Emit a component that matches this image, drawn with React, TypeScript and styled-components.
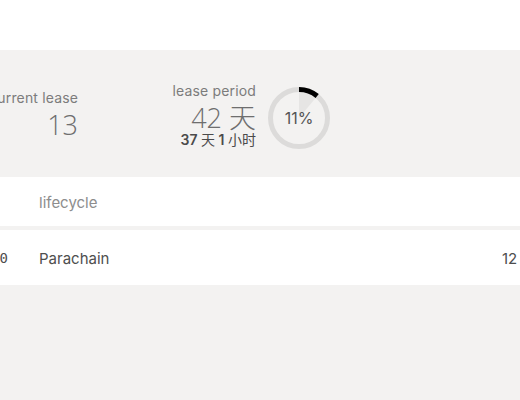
import styled, { createGlobalStyle } from "styled-components";

const GlobalStyle = createGlobalStyle`
  html, body {
    margin: 0;
    padding: 0;
    background: #f3f2f1;
    overflow: hidden;
    font-family: Inter, "Noto Sans CJK SC", sans-serif;
  }
`;

function Donut({ percent }: { percent: number }) {
  const size = 64;
  const c = size / 2;
  const r = 28.5;
  const inner = 26;
  const angle = (percent / 100) * Math.PI * 2;
  const ex = c + r * Math.sin(angle);
  const ey = c - r * Math.cos(angle);
  const ix = c + inner * Math.sin(angle);
  const iy = c - inner * Math.cos(angle);
  const large = percent > 50 ? 1 : 0;
  return (
    <DonutWrap>
      <svg width={size} height={size} viewBox={`0 0 ${size} ${size}`}>
        <circle cx={c} cy={c} r={r} fill="none" stroke="#dcdbda" strokeWidth={5} />
        <path d={`M ${c} ${c} L ${c} ${c - inner} A ${inner} ${inner} 0 ${large} 1 ${ix} ${iy} Z`} fill="#e6e5e4" />
        <path
          d={`M ${c} ${c - r} A ${r} ${r} 0 ${large} 1 ${ex} ${ey}`}
          fill="none"
          stroke="#000"
          strokeWidth={5}
        />
      </svg>
      <DonutLabel>{percent}%</DonutLabel>
    </DonutWrap>
  );
}

export default function App() {
  return (
    <>
      <GlobalStyle />
      <Page>
        <TopBar />
        <Summary>
          <SummaryItem $width={100}>
            <Label>current lease</Label>
            <BigValue>13</BigValue>
          </SummaryItem>
          <SummaryItem $width={110} style={{ marginLeft: 68 }}>
            <Label>lease period</Label>
            <BigValue>42 天</BigValue>
            <SubValue>
              37 <Unit>天</Unit> 1 <Unit>小时</Unit>
            </SubValue>
          </SummaryItem>
          <Donut percent={11} />
        </Summary>
        <Table>
          <Row $height={49}>
            <IdCell />
            <HeadCell>lifecycle</HeadCell>
            <Cell />
          </Row>
          <Row $height={55}>
            <IdCell>2000</IdCell>
            <Cell $grow>Parachain</Cell>
            <Cell>12</Cell>
          </Row>
        </Table>
      </Page>
    </>
  );
}

const Page = styled.div`
  width: 620px;
  margin-left: -22px;
`;

const TopBar = styled.div`
  height: 50px;
  background: #ffffff;
`;

const Summary = styled.section`
  height: 127px;
  display: flex;
  align-items: center;
  padding-top: 1px;
  box-sizing: border-box;
`;

const SummaryItem = styled.div<{ $width: number }>`
  width: ${(p) => p.$width}px;
  display: flex;
  flex-direction: column;
  align-items: flex-end;
  text-align: right;
`;

const Label = styled.div`
  font-size: 14px;
  line-height: 18px;
  color: #7c7c7c;
  letter-spacing: 0.15px;
`;

const BigValue = styled.div`
  margin-top: 4px;
  font-family: "Open Sans", "Noto Sans CJK SC", sans-serif;
  font-size: 27px;
  line-height: 28px;
  font-weight: 300;
  color: #6e6e6e;
`;

const SubValue = styled.div`
  font-size: 14px;
  line-height: 15px;
  font-weight: 600;
  color: #4b4b4b;
  white-space: nowrap;
`;

const Unit = styled.span`
  font-weight: 400;
`;

const DonutWrap = styled.div`
  position: relative;
  width: 64px;
  height: 64px;
  margin-left: 11px;
  margin-top: 8px;
  svg {
    display: block;
  }
`;

const DonutLabel = styled.span`
  position: absolute;
  inset: 0;
  display: flex;
  align-items: center;
  justify-content: center;
  font-size: 16px;
  color: #555555;
`;

const Table = styled.div`
  display: flex;
  flex-direction: column;
  gap: 4px;
`;

const Row = styled.div<{ $height: number }>`
  height: ${(p) => p.$height}px;
  background: #ffffff;
  display: flex;
  align-items: center;
  padding-top: 1px;
  box-sizing: border-box;
`;

const IdCell = styled.div`
  width: 30px;
  flex-shrink: 0;
  overflow: hidden;
  direction: rtl;
  font-family: "DejaVu Sans Mono", monospace;
  font-size: 14px;
  color: #4e4e4e;
  white-space: nowrap;
`;

const Cell = styled.div<{ $grow?: boolean }>`
  width: ${(p) => (p.$grow ? "463px" : "auto")};
  padding-left: ${(p) => (p.$grow ? "31px" : "0")};
  flex-shrink: 0;
  font-size: 15px;
  color: #4e4e4e;
`;

const HeadCell = styled.div`
  width: 463px;
  padding-left: 31px;
  flex-shrink: 0;
  font-size: 15px;
  color: #8d8d8d;
`;
